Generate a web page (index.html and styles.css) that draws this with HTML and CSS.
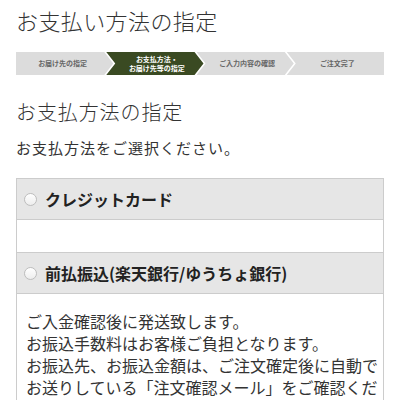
FILE: index.html
```html
<!DOCTYPE html>
<html lang="ja">
<head>
<meta charset="utf-8">
<link rel="stylesheet" href="styles.css">
</head>
<body>
<div class="page">
  <h1 class="title">お支払い方法の指定</h1>
  <ol class="steps">
    <li class="step first"><span>お届け先の指定</span></li>
    <li class="step active"><span>お支払方法・<br>お届け先等の指定</span></li>
    <li class="step"><span>ご入力内容の確認</span></li>
    <li class="step last"><span>ご注文完了</span></li>
  </ol>
  <h2 class="section-title">お支払方法の指定</h2>
  <p class="lead">お支払方法をご選択ください。</p>
  <div class="methods">
    <label class="method-head"><span class="radio"></span>クレジットカード</label>
    <div class="method-body empty"></div>
    <label class="method-head"><span class="radio"></span>前払振込(楽天銀行/ゆうちょ銀行)</label>
    <div class="method-body">
      ご入金確認後に発送致します。<br>
      お振込手数料はお客様ご負担となります。<br>
      お振込先、お振込金額は、ご注文確定後に自動でお送りしている「注文確認メール」をご確認ください。
    </div>
  </div>
</div>
</body>
</html>
```
FILE: styles.css
```css
html, body {
  margin: 0;
  padding: 0;
  background: #fff;
}
body {
  font-family: "Noto Sans CJK JP", "Noto Sans", sans-serif;
  color: #333;
}
.page {
  padding: 4px 16px 0 16px;
}
.title {
  margin: 0;
  font-size: 22px;
  font-weight: 300;
  line-height: 33px;
  letter-spacing: 0.4px;
  color: #333;
}
.steps {
  list-style: none;
  margin: 15px 0 0 0;
  padding: 0;
  display: flex;
  height: 23px;
}
.step {
  flex: 1;
  margin-left: -7px;
  background: #dcdcdc;
  color: #666;
  font-size: 7px;
  font-weight: bold;
  line-height: 9px;
  display: flex;
  align-items: center;
  justify-content: center;
  text-align: center;
  clip-path: polygon(0 0, calc(100% - 9px) 0, 100% 50%, calc(100% - 9px) 100%, 0 100%, 9px 50%);
}
.step span {
  padding-left: 4px;
}
.step.first {
  margin-left: 0;
  clip-path: polygon(0 0, calc(100% - 9px) 0, 100% 50%, calc(100% - 9px) 100%, 0 100%);
}
.step.first span {
  padding-left: 0;
  padding-right: 4px;
}
.step.last {
  clip-path: polygon(0 0, 100% 0, 100% 100%, 0 100%, 9px 50%);
}
.step.active {
  background: #3a4a22;
  color: #fff;
}
.section-title {
  margin: 22px 0 0 0;
  font-size: 20px;
  font-weight: 300;
  line-height: 30px;
  letter-spacing: 0.9px;
  color: #333;
}
.lead {
  margin: 10px 0 0 0;
  font-size: 15px;
  line-height: 22px;
  letter-spacing: 1px;
  color: #333;
}
.methods {
  margin-top: 19px;
  border: 1px solid #cccccc;
  border-bottom: none;
}
.method-head {
  display: flex;
  align-items: center;
  height: 40px;
  padding-left: 7px;
  background: #e6e6e6;
  border-bottom: 1px solid #cccccc;
  font-size: 16px;
  font-weight: bold;
  color: #222;
}
.radio {
  width: 11px;
  height: 11px;
  border: 1px solid #bdbdbd;
  border-radius: 50%;
  background: linear-gradient(#ffffff, #ededed);
  margin-right: 8px;
  flex: none;
}
.method-body {
  background: #fff;
  border-bottom: 1px solid #cccccc;
  padding: 16px 4px 16px 9px;
  font-size: 16px;
  line-height: 22px;
  color: #333;
}
.method-body.empty {
  padding: 16px 0;
}
```
